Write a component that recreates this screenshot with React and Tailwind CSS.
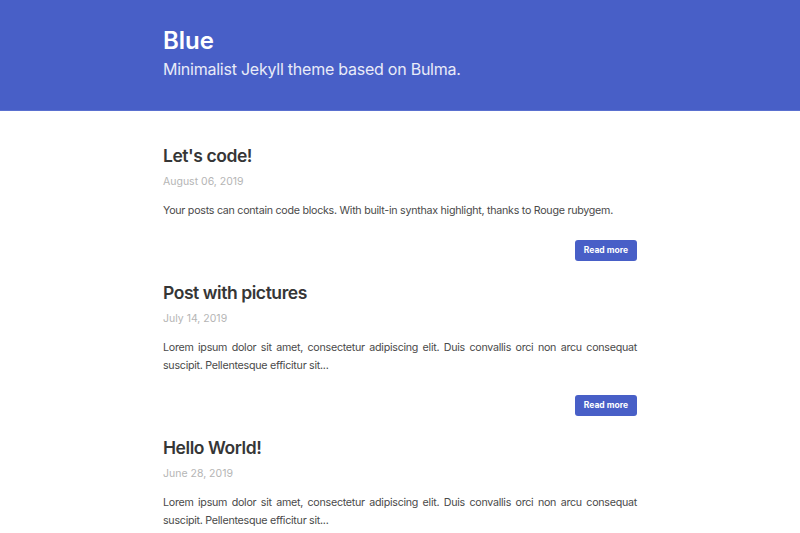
const posts = [
  {
    title: "Let's code!",
    date: 'August 06, 2019',
    excerpt:
      'Your posts can contain code blocks. With built-in synthax highlight, thanks to Rouge rubygem.',
  },
  {
    title: 'Post with pictures',
    date: 'July 14, 2019',
    excerpt:
      'Lorem ipsum dolor sit amet, consectetur adipiscing elit. Duis convallis orci non arcu consequat suscipit. Pellentesque efficitur sit...',
  },
  {
    title: 'Hello World!',
    date: 'June 28, 2019',
    excerpt:
      'Lorem ipsum dolor sit amet, consectetur adipiscing elit. Duis convallis orci non arcu consequat suscipit. Pellentesque efficitur sit...',
  },
];

function Post({ post }) {
  return (
    <article className="flex flex-col">
      <h2 className="text-[17.5px] leading-[24px] font-semibold tracking-[-0.025em] text-[#363636]">
        {post.title}
      </h2>
      <p className="mt-[6px] text-[10.5px] leading-[16px] text-[#b5b5b5]">{post.date}</p>
      <p className="mt-[12px] text-[10.7px] leading-[18px] tracking-[-0.025em] text-[#4a4a4a] text-justify">
        {post.excerpt}
      </p>
      <div className="mt-[20px] flex justify-end">
        <a
          href="#"
          className="h-[21px] px-[9px] flex items-center rounded-[3px] bg-[#485fc7] text-white text-[8.5px] font-bold"
        >
          Read more
        </a>
      </div>
    </article>
  );
}

export default function App() {
  return (
    <div className="min-h-screen bg-white font-['Inter','Liberation_Sans',sans-serif]">
      <header className="h-[111px] bg-[#485fc7] border-b border-[#5a70d0]">
        <div className="w-[474px] mx-auto pt-[25px]">
          <h1 className="text-[24px] leading-[32px] font-semibold text-white">Blue</h1>
          <p className="mt-[1px] text-[16px] leading-[22px] tracking-[-0.015em] text-[#e8ebf8]">
            Minimalist Jekyll theme based on Bulma.
          </p>
        </div>
      </header>
      <main className="w-[474px] mx-auto pt-[33px] flex flex-col gap-[20px]">
        {posts.map((p) => (
          <Post key={p.title} post={p} />
        ))}
      </main>
    </div>
  );
}
